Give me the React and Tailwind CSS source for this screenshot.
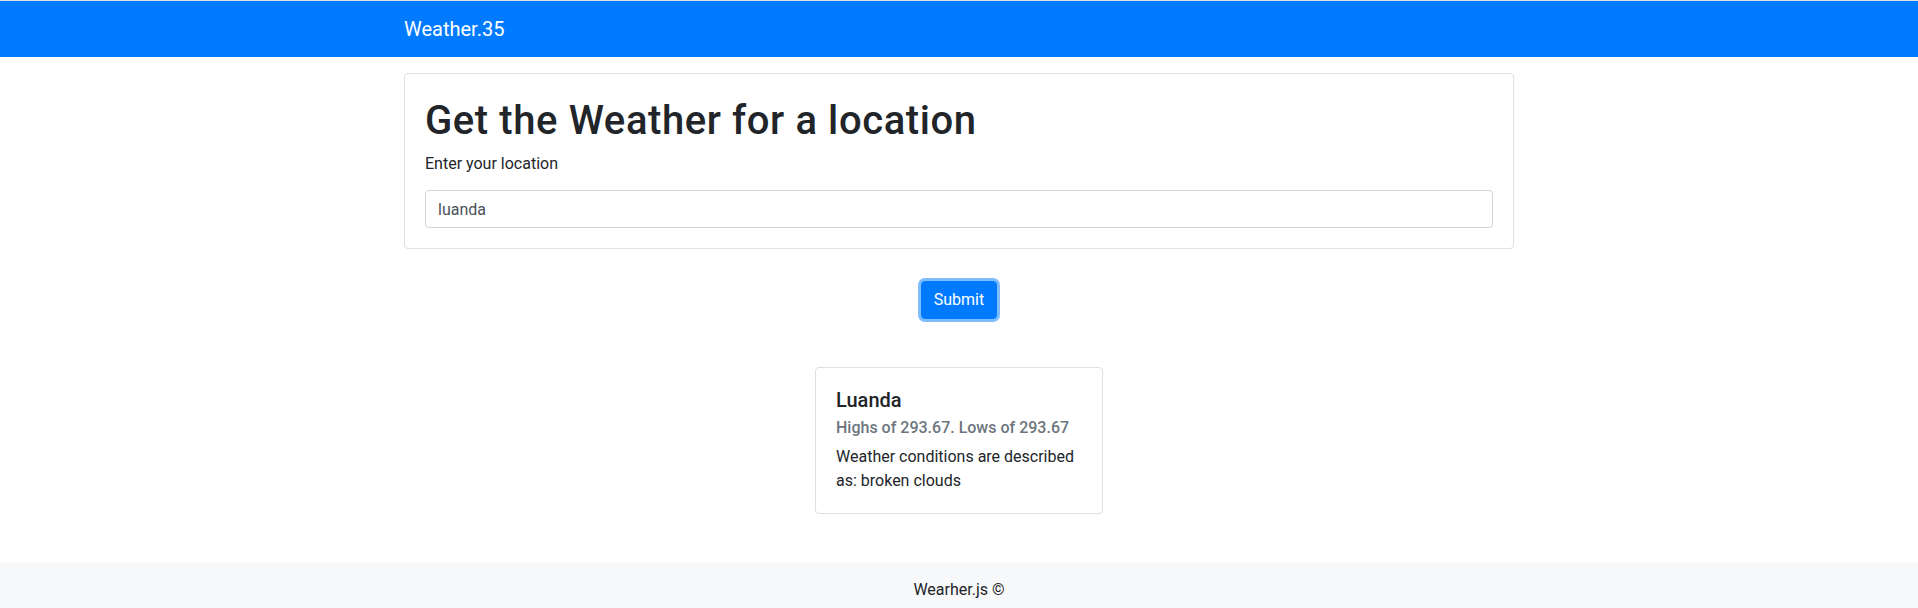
import { useState } from "react";

const font = { fontFamily: 'Roboto, "Noto Sans", sans-serif' };

const App = () => {
  const [city, setCity] = useState("luanda");

  return (
    <div className="min-h-screen flex flex-col bg-white text-[#212529]" style={font}>
      <nav className="border-t border-[#dee2e6] bg-[#007bff]">
        <div className="max-w-[1140px] mx-auto px-[15px] h-14 flex items-center">
          <span className="text-xl text-white">Weather.35</span>
        </div>
      </nav>

      <main className="max-w-[1140px] w-full mx-auto px-[15px] pt-4">
        <div className="border border-[#dfdfdf] rounded p-5">
          <h1 className="text-[40px] leading-[48px] font-medium tracking-[0.015em] pt-[3px] mb-[5px]">
            Get the Weather for a location
          </h1>
          <p className="text-base leading-6 pt-[2px] mb-[14px]">Enter your location</p>
          <input
            value={city}
            onChange={(e) => setCity(e.target.value)}
            className="w-full h-[38px] px-3 border border-[#ced4da] rounded text-base text-[#495057] outline-none"
          />
        </div>

        <div className="flex justify-center mt-8">
          <button className="h-[38px] px-3 rounded bg-[#007bff] border border-[#007bff] text-white text-base shadow-[0_0_0_3px_rgba(0,123,255,0.5)]">
            Submit
          </button>
        </div>

        <div className="flex justify-center mt-12 mb-12">
          <div className="w-[288px] border border-[#dfdfdf] rounded p-5">
            <h5 className="text-xl leading-6 font-medium mb-3">Luanda</h5>
            <h6 className="text-base leading-[19px] font-medium text-[#6c757d] -mt-1.5 mb-2">
              Highs of 293.67. Lows of 293.67
            </h6>
            <p className="text-base leading-6">Weather conditions are described as: broken clouds</p>
          </div>
        </div>
      </main>

      <footer className="bg-[#f8f9fa] py-4 text-center text-base leading-6">Wearher.js ©</footer>
    </div>
  );
};

export default App;
